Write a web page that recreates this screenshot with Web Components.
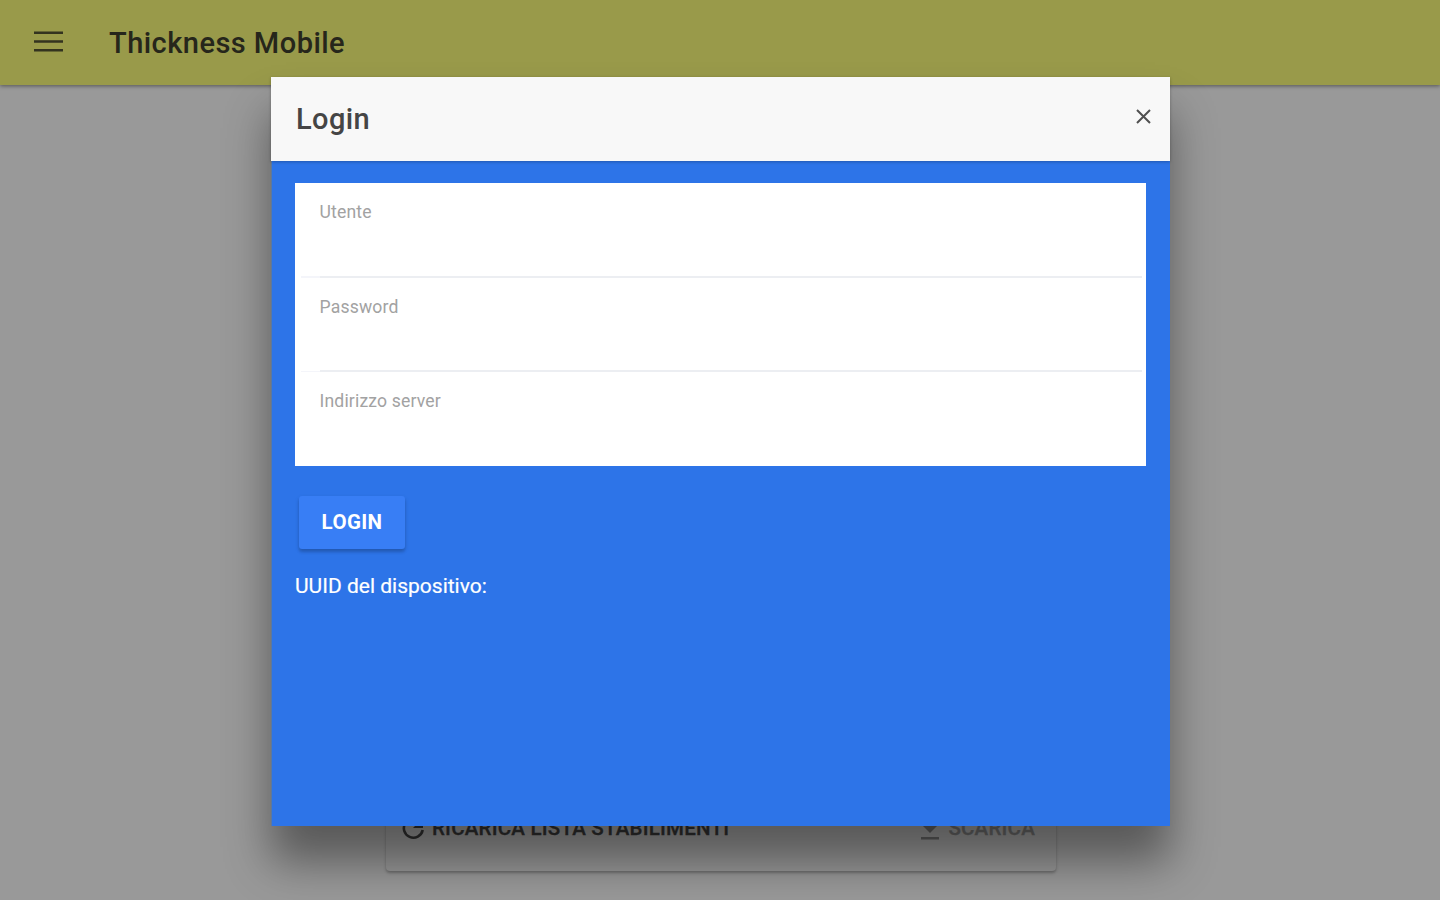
<!DOCTYPE html>
<html lang="it">
<head>
<meta charset="utf-8">
<title>Thickness Mobile</title>
<style>
html,body{margin:0;height:100%;overflow:hidden}
body{font-family:Roboto,"Liberation Sans",sans-serif;color:#222}
</style>
</head>
<body>
<thickness-app></thickness-app>
<script>
const define = (name, html) => customElements.define(name, class extends HTMLElement {
  constructor() {
    super();
    this.attachShadow({ mode: 'open' }).innerHTML = html;
  }
});

define('app-toolbar', `<style>
:host{display:flex;align-items:center;flex:none;box-sizing:border-box;height:85px;padding-left:34px;background:#999a4a;box-shadow:0 1px 4px rgba(0,0,0,.45);position:relative;color:#26261b}
svg{display:block;width:29px;height:22px;margin:-2px 46px 0 0}
h1{margin:0;font-size:29px;font-weight:500;line-height:40px;letter-spacing:.47px}
</style><svg viewBox="0 0 29 22" fill="none" stroke="#33331f" stroke-width="2.6"><path d="M0 1.7h29M0 10.5h29M0 19.3h29"/></svg><h1><slot></slot></h1>`);

define('plant-card', `<style>
:host{display:flex;box-sizing:border-box;width:670px;height:160px;align-items:flex-end;justify-content:space-between;padding:0 21px 29px 16px;border-radius:4px;background:#999;box-shadow:0 2px 3px rgba(0,0,0,.28)}
</style><slot></slot>`);

define('card-action', `<style>
:host{display:flex;align-items:center;gap:7px;font-size:20.5px;font-weight:500;line-height:27px;letter-spacing:.22px;color:#303030;white-space:nowrap;-webkit-text-stroke:.3px currentColor}
:host([disabled]){color:#686868;gap:8px}
::slotted(svg){display:block;flex:none}
</style><slot name="icon"></slot><span><slot></slot></span>`);

define('form-item', `<style>
:host{display:block;box-sizing:border-box;height:94.5px;padding:0 4px 0 24.5px;background:linear-gradient(#f4f5fa,#f4f5fa) 6px 93px/20px 2px no-repeat}
div{box-sizing:border-box;height:100%;border-bottom:2.5px solid #eceef2;padding-top:17px;font-size:17.6px;line-height:24px;letter-spacing:.16px;color:#a2a2a2}
:host([last]){background:none;height:94px}
:host([last]) div{border:0}
</style><div><slot></slot></div>`);

define('raised-button', `<style>
:host{display:block}
button{display:block;border:0;box-sizing:border-box;width:106px;height:53px;padding:0;border-radius:3px;background:#387ef5;color:#fff;font:700 20.5px/53px Roboto,sans-serif;letter-spacing:.35px;box-shadow:0 3px 3px rgba(0,0,0,.16),0 2px 5px rgba(0,0,0,.1)}
</style><button type="button"><slot></slot></button>`);

define('login-modal', `<style>
:host{display:flex;flex-direction:column;width:899px;height:749px;background:linear-gradient(90deg,#5c789f 1px,#2d74e8 1px);box-shadow:0 36px 42px rgba(0,0,0,.42)}
header{display:flex;align-items:center;justify-content:space-between;flex:none;box-sizing:border-box;height:84px;padding:0 19px 0 25px;background:#f8f8f8;color:#454545;box-shadow:0 1px 3px rgba(0,0,0,.25)}
h2{margin:0;font-size:29px;font-weight:500;line-height:40px;letter-spacing:.4px}
header svg{width:15px;height:15px;margin-top:-5px}
main{display:flex;flex-direction:column;align-items:flex-start;padding:22px 24px}
.list{width:851px;background:#fff}
raised-button{margin:30px 0 0 4px}
p{margin:23px 0 0;color:#fff;font-size:21px;line-height:28px;-webkit-text-stroke:.2px #fff}
</style>
<header><h2>Login</h2><svg viewBox="0 0 15 15" fill="none" stroke="#505050" stroke-width="2"><path d="M1 1l13 13M14 1L1 14"/></svg></header>
<main><div class="list"><form-item>Utente</form-item><form-item>Password</form-item><form-item last>Indirizzo server</form-item></div>
<raised-button>LOGIN</raised-button><p>UUID del dispositivo:</p></main>`);

define('thickness-app', `<style>
:host{display:flex;flex-direction:column;width:1440px;height:900px;background:#999;overflow:hidden}
section{display:flex;flex:1;flex-direction:column;justify-content:flex-end;align-items:flex-start;padding:0 0 29px 386px}
login-modal{position:absolute;left:271px;top:77px}
</style>
<app-toolbar>Thickness Mobile</app-toolbar>
<section><plant-card>
<card-action><svg slot="icon" width="23" height="23" viewBox="0 0 23 23"><path d="M18.4 4.8A9.5 9.5 0 1 0 20.7 13" fill="none" stroke="#303030" stroke-width="2.6"/><path d="M21 1v10H11z" fill="#303030"/></svg>RICARICA LISTA STABILIMENTI</card-action>
<card-action disabled><svg slot="icon" width="20" height="24" viewBox="0 0 20 24" fill="#606060"><path d="M7 0h6v8h5l-8 8-8-8h5zM1 20h18v2.5H1z"/></svg>SCARICA</card-action>
</plant-card></section>
<login-modal></login-modal>`);
</script>
</body>
</html>
